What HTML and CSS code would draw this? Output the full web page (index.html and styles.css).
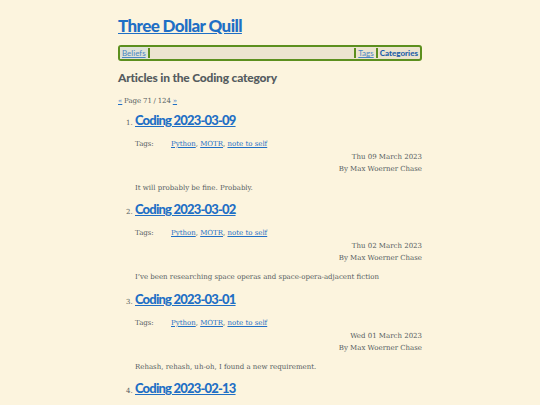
FILE: index.html
```html
<!DOCTYPE html>
<html>
<head>
<meta charset="utf-8">
<link rel="stylesheet" href="styles.css">
</head>
<body>
<div class="page">
  <header>
    <h1 class="site-title"><a href="#">Three Dollar Quill</a></h1>
    <nav class="nav">
      <a class="nav-link first" href="#">Beliefs</a>
      <span class="sep"></span>
      <span class="spacer"></span>
      <span class="sep"></span>
      <a class="nav-link" href="#">Tags</a>
      <span class="sep"></span>
      <a class="nav-link current" href="#">Categories</a>
    </nav>
  </header>
  <h2 class="cat-heading">Articles in the Coding category</h2>
  <p class="pager"><a href="#">«</a> Page 71 / 124 <a href="#">»</a></p>
  <ol class="articles">
    <li>
      <h3 class="art-title"><a href="#">Coding 2023-03-09</a></h3>
      <div class="tags"><span class="tags-label">Tags:</span><span><a href="#">Python</a>, <a href="#">MOTR</a>, <a href="#">note to self</a></span></div>
      <div class="meta"><div>Thu 09 March 2023</div><div>By Max Woerner Chase</div></div>
      <p class="summary">It will probably be fine. Probably.</p>
    </li>
    <li>
      <h3 class="art-title"><a href="#">Coding 2023-03-02</a></h3>
      <div class="tags"><span class="tags-label">Tags:</span><span><a href="#">Python</a>, <a href="#">MOTR</a>, <a href="#">note to self</a></span></div>
      <div class="meta"><div>Thu 02 March 2023</div><div>By Max Woerner Chase</div></div>
      <p class="summary">I’ve been researching space operas and space-opera-adjacent fiction</p>
    </li>
    <li>
      <h3 class="art-title"><a href="#">Coding 2023-03-01</a></h3>
      <div class="tags"><span class="tags-label">Tags:</span><span><a href="#">Python</a>, <a href="#">MOTR</a>, <a href="#">note to self</a></span></div>
      <div class="meta"><div>Wed 01 March 2023</div><div>By Max Woerner Chase</div></div>
      <p class="summary">Rehash, rehash, uh-oh, I found a new requirement.</p>
    </li>
    <li>
      <h3 class="art-title"><a href="#">Coding 2023-02-13</a></h3>
    </li>
  </ol>
</div>
</body>
</html>
```
FILE: styles.css
```css
html, body {
  margin: 0;
  padding: 0;
  background: #fcf4de;
  overflow: hidden;
}
body {
  font-family: "DejaVu Serif", serif;
  color: #555c5f;
  font-size: 7px;
}
a { color: #1f6fc5; }
.page {
  width: 304px;
  margin: 0 auto;
  padding-top: 15px;
}
.site-title {
  margin: 0;
  font-family: Lato, sans-serif;
  font-size: 17px;
  font-weight: 900;
  line-height: 22px;
  letter-spacing: -0.6px;
}
.nav {
  margin-top: 8px;
  display: flex;
  align-items: stretch;
  border: 2px solid #5c8f1e;
  border-radius: 3px;
  background: #ece4cf;
  height: 12px;
  font-family: Lato, sans-serif;
  font-size: 8px;
  line-height: 12px;
}
.nav-link {
  padding: 0 2px;
  color: #4a86c2;
}
.nav-link.first { background: #dfe2d7; }
.nav-link.current {
  font-weight: 900;
  text-decoration: none;
  color: #1f5fa8;
}
.sep {
  width: 2px;
  background: #5c8f1e;
  margin: 1px 0;
}
.spacer { flex: 1; }
.cat-heading {
  margin: 9px 0 0;
  font-family: Lato, sans-serif;
  font-size: 12px;
  font-weight: 900;
  line-height: 16px;
  letter-spacing: -0.2px;
  color: #555c5f;
}
.pager {
  margin: 9px 0 0;
  font-size: 7px;
  line-height: 12px;
  word-spacing: -0.5px;
}
.articles {
  margin: 4px 0 0;
  padding-left: 17px;
  font-size: 7px;
}
.articles li { padding-bottom: 6.4px; }
.art-title {
  margin: 0;
  font-family: Lato, sans-serif;
  font-size: 13px;
  font-weight: 900;
  line-height: 18px;
  letter-spacing: -0.8px;
}
.tags {
  display: flex;
  margin-top: 9px;
  font-size: 7px;
  line-height: 12px;
}
.tags-label { width: 36px; }
.meta {
  text-align: right;
  font-size: 7px;
  line-height: 12px;
  margin-top: 1px;
}
.summary {
  margin: 7px 0 0;
  font-size: 7px;
  line-height: 12px;
}
```
